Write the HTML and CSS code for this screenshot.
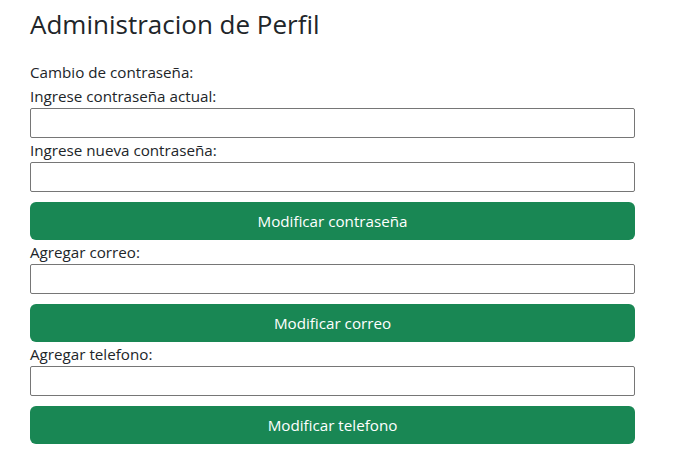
FILE: index.html
```html
<!DOCTYPE html>
<html lang="es">
<head>
<meta charset="utf-8">
<title>Administracion de Perfil</title>
<link rel="stylesheet" href="styles.css">
</head>
<body>
<main class="page">
  <h2 class="title">Administracion de Perfil</h2>
  <form class="form">
    <p class="label">Cambio de contraseña:</p>
    <label class="label" for="actual">Ingrese contraseña actual:</label>
    <input class="field" id="actual" type="password">
    <label class="label" for="nueva">Ingrese nueva contraseña:</label>
    <input class="field" id="nueva" type="password">
    <button class="btn" type="button">Modificar contraseña</button>
    <label class="label" for="correo">Agregar correo:</label>
    <input class="field" id="correo" type="text">
    <button class="btn" type="button">Modificar correo</button>
    <label class="label" for="telefono">Agregar telefono:</label>
    <input class="field" id="telefono" type="text">
    <button class="btn" type="button">Modificar telefono</button>
  </form>
</main>
</body>
</html>
```
FILE: styles.css
```css
html, body {
  margin: 0;
  padding: 0;
  background: #fff;
}
body {
  font-family: "Open Sans", "Noto Sans", sans-serif;
  font-size: 15.2px;
  line-height: 24px;
  color: #212529;
}
.page {
  width: 605px;
  padding: 0 30px;
}
.title {
  margin: 0;
  padding-top: 7px;
  height: 60px;
  box-sizing: border-box;
  font-size: 26px;
  font-weight: 400;
  line-height: 34px;
}
.form {
  display: flex;
  flex-direction: column;
}
.label {
  display: block;
  margin: 0;
  height: 24px;
  line-height: 25px;
}
.field {
  box-sizing: border-box;
  width: 605px;
  height: 30px;
  margin: 0;
  border: 1px solid #767676;
  border-radius: 2px;
  background: #fff;
  padding: 1px 2px;
  font: inherit;
}
.field + .btn {
  margin-top: 10px;
}
.btn {
  box-sizing: border-box;
  width: 605px;
  height: 38px;
  margin: 0;
  border: 0;
  border-radius: 6px;
  background: #198754;
  color: #fff;
  font: inherit;
  line-height: 38px;
  padding: 0;
  cursor: pointer;
}
```
